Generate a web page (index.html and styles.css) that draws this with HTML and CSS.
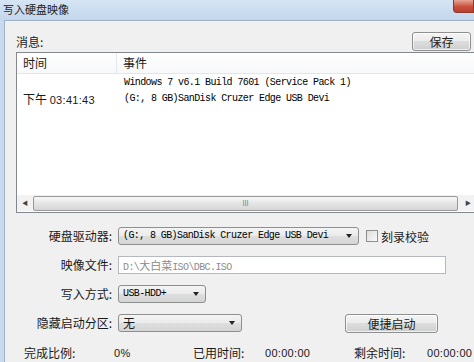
FILE: index.html
```html
<!DOCTYPE html>
<html lang="zh-CN">
<head>
  <meta charset="UTF-8">
  <title>写入硬盘映像</title>
  <link rel="stylesheet" href="styles.css">
</head>
<body>
  <div class="titlebar">
    <span class="title">写入硬盘映像</span>
    <span class="close"></span>
  </div>

  <div class="frame">
    <div class="panel">
      <div class="msg-head">
        <span>消息:</span>
        <button class="btn save">保存</button>
      </div>

      <div class="list">
        <div class="list-head">
          <div class="col-time">时间</div>
          <div class="col-event">事件</div>
        </div>
        <div class="list-body">
          <div class="col-time"></div>
          <div class="col-event mono">Windows 7 v6.1 Build 7601 (Service Pack 1)</div>
          <div class="col-time">下午 <span class="num">03:41:43</span></div>
          <div class="col-event mono">(G:, 8 GB)SanDisk Cruzer Edge USB Devi</div>
        </div>
        <div class="hscroll">
          <span class="arrow">&#9664;</span>
          <span class="thumb"><span class="grip">III</span></span>
          <span class="arrow">&#9654;</span>
        </div>
      </div>

      <div class="form">
        <label>硬盘驱动器:</label>
        <div class="row">
          <div class="combo drive"><span class="mono">(G:, 8 GB)SanDisk Cruzer Edge USB Devi</span><span class="caret"></span></div>
          <span class="check"><span class="box"></span>刻录校验</span>
        </div>

        <label>映像文件:</label>
        <div class="row">
          <div class="field mono">D:\<span class="cn">大白菜</span>ISO\DBC.ISO</div>
        </div>

        <label>写入方式:</label>
        <div class="row">
          <div class="combo mode"><span class="mono">USB-HDD+</span><span class="caret"></span></div>
        </div>

        <label>隐藏启动分区:</label>
        <div class="row">
          <div class="combo hide"><span>无</span><span class="caret"></span></div>
          <button class="btn quick">便捷启动</button>
        </div>
      </div>

      <div class="status">
        <span>完成比例:</span>
        <span class="num">0%</span>
        <span>已用时间:</span>
        <span class="num">00:00:00</span>
        <span>剩余时间:</span>
        <span class="num">00:00:00</span>
      </div>
    </div>
  </div>
</body>
</html>
```

FILE: styles.css
```css
:root {
  --face: #f0f0f0;
  --frame: #c7daef;
  --line: #828790;
  --text: #1a1a1a;
}

* {
  margin: 0;
  padding: 0;
  box-sizing: border-box;
}

body {
  width: 474px;
  height: 362px;
  overflow: hidden;
  font-family: "Noto Sans CJK SC", "Noto Sans", sans-serif;
  font-size: 12px;
  color: var(--text);
  background: var(--frame);
}

.titlebar {
  height: 20px;
  display: flex;
  align-items: flex-start;
  background: linear-gradient(#d6e5f4, #c2d6ec);
}

.title {
  font-size: 11px;
  line-height: 18px;
  padding-left: 3px;
  color: #222;
}

.close {
  margin-left: auto;
  width: 21px;
  height: 13px;
  border: 1px solid #8a3a30;
  border-top: none;
  border-radius: 0 0 0 4px;
  background: linear-gradient(#e8a595, #c9503c 55%, #b8402d);
}

.frame {
  display: flex;
  height: 342px;
  padding-left: 4px;
}

.panel {
  flex: 1;
  background: var(--face);
  border-left: 1px solid #9fb1c6;
  border-top: 1px solid #9fb1c6;
}

.msg-head {
  display: flex;
  justify-content: space-between;
  align-items: flex-end;
  padding: 11px 3px 0 11px;
  line-height: 16px;
}

.msg-head span {
  padding-bottom: 1px;
}

.btn {
  font-family: inherit;
  font-size: 12px;
  color: #222;
  border: 1px solid #8e8f8f;
  border-radius: 3px;
  background: linear-gradient(#f4f4f4 0%, #ececec 45%, #dddddd 50%, #cfcfcf 100%);
  box-shadow: inset 0 0 0 1px rgba(255, 255, 255, 0.7);
}

.save {
  width: 59px;
  height: 19px;
  line-height: 15px;
}

.list {
  margin: 1px -3px 0 11px;
  height: 161px;
  border: 1px solid var(--line);
  background: #fff;
  display: flex;
  flex-direction: column;
}

.list-head {
  display: flex;
  height: 21px;
  line-height: 20px;
  border-bottom: 1px solid #e5e5e5;
  background: linear-gradient(#ffffff, #f7f8fa);
}

.list-head .col-time {
  border-right: 1px solid #e3e6ea;
}

.col-time {
  width: 100px;
  padding-left: 6px;
}

.col-event {
  padding-left: 6px;
}

.list-body {
  flex: 1;
  display: grid;
  grid-template-columns: 100px 1fr;
  grid-auto-rows: 16px;
  align-content: start;
  padding-top: 1px;
  line-height: 16px;
}

.list-body .col-event {
  padding-left: 7px;
}

.list-body .col-time {
  padding-left: 6px;
  white-space: nowrap;
}

.mono {
  font-family: "Liberation Mono", monospace;
  font-size: 10px;
  letter-spacing: -0.6px;
  color: #000;
  white-space: nowrap;
}

.num {
  font-family: "Liberation Sans", sans-serif;
  font-size: 11px;
  letter-spacing: 0.3px;
}

.hscroll {
  display: flex;
  height: 16px;
  margin-bottom: 1px;
  background: #f2f2f2;
}

.arrow {
  width: 16px;
  font-size: 6px;
  line-height: 16px;
  text-align: center;
  color: #444;
}

.thumb {
  flex: 1;
  margin: 1px 2px 0 0;
  border: 1px solid #999;
  border-radius: 2px;
  background: linear-gradient(#f7f7f7, #e4e4e4 50%, #d6d6d6);
  display: flex;
  justify-content: center;
}

.grip {
  font-size: 7px;
  line-height: 13px;
  color: #777;
}

.form {
  display: grid;
  grid-template-columns: 107px 1fr;
  grid-auto-rows: 18px;
  column-gap: 6px;
  row-gap: 11px;
  margin-top: 14px;
}

.form label {
  text-align: right;
  line-height: 18px;
}

.row {
  display: flex;
  align-items: center;
}

.combo {
  height: 18px;
  display: flex;
  align-items: center;
  justify-content: space-between;
  padding: 0 6px 0 4px;
  border: 1px solid #8e8f8f;
  border-radius: 3px;
  background: linear-gradient(#f4f4f4, #ebebeb 50%, #dedede 51%, #d5d5d5);
  line-height: 16px;
}

.caret {
  width: 0;
  height: 0;
  border-left: 3px solid transparent;
  border-right: 3px solid transparent;
  border-top: 4px solid #222;
}

.drive {
  width: 241px;
}

.mode {
  width: 88px;
}

.hide {
  width: 124px;
}

.check {
  display: flex;
  align-items: center;
  gap: 3px;
  margin-left: 7px;
}

.box {
  width: 12px;
  height: 12px;
  border: 1px solid #8f8f8f;
  background: linear-gradient(135deg, #dcdcdc, #fafafa);
}

.field {
  width: 328px;
  height: 18px;
  line-height: 16px;
  padding-left: 4px;
  border: 1px solid #b5b8bd;
  background: #fff;
  color: #8c8c8c;
}

.field .cn {
  font-family: "Noto Sans CJK SC", sans-serif;
  font-size: 11px;
  letter-spacing: 0;
}

.quick {
  margin-left: 103px;
  width: 93px;
  height: 19px;
  line-height: 15px;
}

.status {
  display: grid;
  grid-template-columns: 90px 79px 72px 89px 73px auto;
  margin-top: 13px;
  padding-left: 19px;
  line-height: 16px;
  white-space: nowrap;
}
```
